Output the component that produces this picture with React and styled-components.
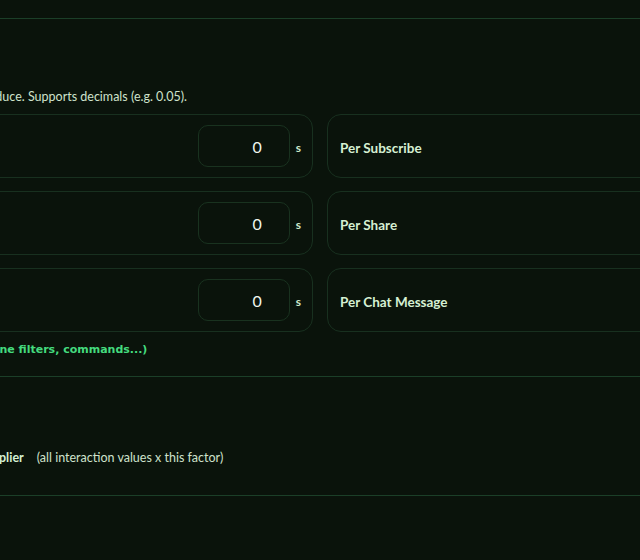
import styled, { createGlobalStyle } from 'styled-components';

const GlobalStyle = createGlobalStyle`
  html, body {
    margin: 0;
    background: #0a130b;
    overflow: hidden;
  }
  * {
    box-sizing: border-box;
  }
`;

const Page = styled.div`
  width: 960px;
  margin-left: -160px;
  font-family: Lato, 'Liberation Sans', sans-serif;
  color: #cfe2cc;
`;

const Section = styled.section`
  padding: ${(p) => p.$pad || '22px 0 18px'};
  border-bottom: 1px solid #1b3f28;
`;

const SectionTitle = styled.h2`
  margin: 0 0 24px;
  font-size: 17px;
  line-height: 24px;
  font-weight: 700;
  color: #d8f2d6;
`;

const Hint = styled.p`
  margin: 0 0 9px;
  font-size: 12.5px;
  line-height: 16px;
  color: #cfe2cc;
`;

const Grid = styled.div`
  display: grid;
  grid-template-columns: 1fr 1fr;
  gap: 13px 14px;
`;

const Card = styled.div`
  height: 64px;
  display: flex;
  align-items: center;
  gap: 6px;
  padding: 0 11px 0 12px;
  border: 1px solid #18301f;
  border-radius: 14px;
`;

const CardLabel = styled.span`
  flex: 1;
  margin-top: 3px;
  font-size: 13.5px;
  font-weight: 700;
  color: #d6f0d3;
`;

const ValueInput = styled.input`
  width: 92px;
  height: 42px;
  padding: 0 27px 0 10px;
  border: 1px solid #19321f;
  border-radius: 10px;
  background: transparent;
  color: #f0f7ee;
  font-family: inherit;
  font-size: 16px;
  text-align: right;
  outline: none;
`;

const Unit = styled.span`
  margin-top: 2px;
  font-size: 12px;
  font-weight: 700;
  color: #cfe8cc;
`;

const MoreLink = styled.a`
  display: block;
  margin-top: 10px;
  font-family: 'DejaVu Sans', Verdana, sans-serif;
  font-size: 11px;
  line-height: 16px;
  font-weight: 700;
  color: #44db7e;
  text-decoration: none;
`;

const Row = styled.div`
  display: flex;
  align-items: center;
  height: 20px;
  gap: 13px;
  font-size: 12.5px;
`;

const RowLabel = styled.span`
  font-weight: 700;
  color: #d6f0d3;
`;

const rates = [
  { label: 'Per Like', value: 0 },
  { label: 'Per Subscribe', value: 0 },
  { label: 'Per Follow', value: 0 },
  { label: 'Per Share', value: 0 },
  { label: 'Per Gift Coin', value: 0 },
  { label: 'Per Chat Message', value: 0 },
];

const RateCard = ({ label, value }) => (
  <Card>
    <CardLabel>{label}</CardLabel>
    <ValueInput type="text" defaultValue={value} />
    <Unit>s</Unit>
  </Card>
);

export default function App() {
  return (
    <Page>
      <GlobalStyle />
      <Section $pad="0 0 18px" />
      <Section>
        <SectionTitle>Timer Rates</SectionTitle>
        <Hint>Seconds; use negatives to reduce. Supports decimals (e.g. 0.05).</Hint>
        <Grid>
          {rates.map((r) => (
            <RateCard key={r.label} {...r} />
          ))}
        </Grid>
        <MoreLink href="#">Advanced settings (timeline filters, commands...)</MoreLink>
      </Section>
      <Section $pad="22px 0 28px">
        <SectionTitle>Multiplier</SectionTitle>
        <Row>
          <RowLabel>Total Interaction Timer Multiplier</RowLabel>
          <span>(all interaction values x this factor)</span>
        </Row>
      </Section>
      <Section $pad="22px 0 12px">
        <SectionTitle>Overlay</SectionTitle>
      </Section>
      <Section $pad="40px 0" />
    </Page>
  );
}
